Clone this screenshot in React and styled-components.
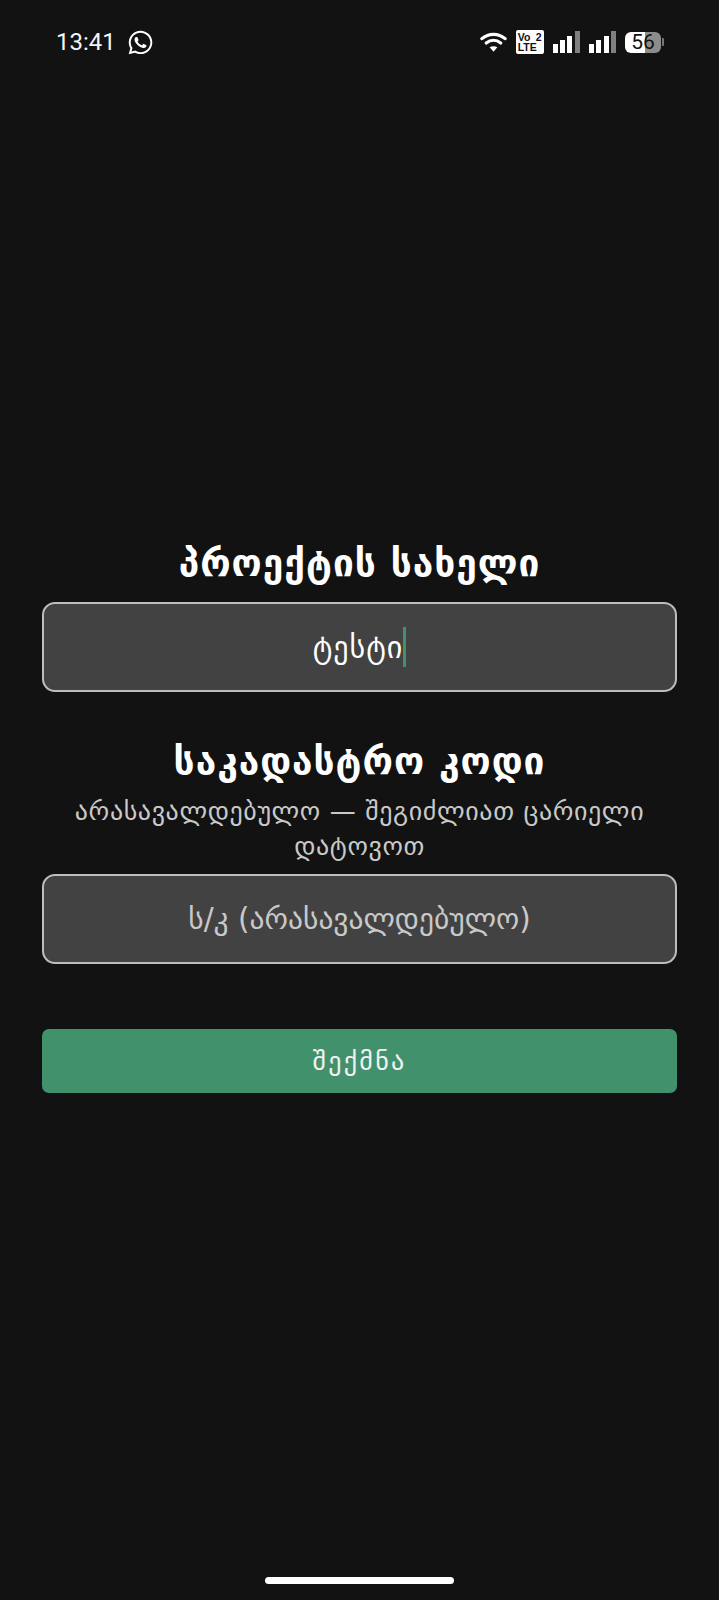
import React from "react";
import styled, { createGlobalStyle } from 'styled-components';
import { FaWhatsapp } from 'react-icons/fa';

const Global = createGlobalStyle`
    html, body {
        margin: 0;
        padding: 0;
        background: #121212;
    }
`;

const Screen = styled.div`
    width: 719px;
    height: 1600px;
    background: #121212;
    color: #fff;
    font-family: "DejaVu Sans", "Noto Sans", sans-serif;
    display: flex;
    flex-direction: column;
    overflow: hidden;
`;

const StatusBar = styled.div`
    height: 84px;
    box-sizing: border-box;
    padding: 0 55px 0 56px;
    display: flex;
    align-items: center;
    justify-content: space-between;
`;

const StatusSide = styled.div`
    display: flex;
    align-items: center;
    gap: ${p => p.$gap || 8}px;
`;

const Clock = styled.span`
    font-family: Roboto, sans-serif;
    font-size: 24px;
    color: #f4f4f4;
    margin-right: 3px;
`;

const VoBadge = styled.div`
    width: 28px;
    height: 24px;
    background: #fff;
    border-radius: 2px;
    color: #111;
    font-family: "Liberation Sans Narrow", "Liberation Sans", sans-serif;
    font-size: 10.5px;
    font-weight: 700;
    line-height: 10px;
    padding: 2px 2px;
    box-sizing: border-box;
    display: flex;
    flex-direction: column;
`;

const VoTop = styled.div`
    display: flex;
    justify-content: space-between;
`;

const Bars = styled.div`
    display: flex;
    align-items: flex-end;
    gap: 2.4px;
    height: 22px;
`;

const Bar = styled.div`
    width: 5px;
    height: ${p => p.$h}px;
    background: ${p => (p.$off ? '#808080' : '#fff')};
`;

const Battery = styled.div`
    display: flex;
    align-items: center;
    gap: 1px;
`;

const BatteryBody = styled.div`
    width: 36px;
    height: 21px;
    border-radius: 6px;
    background: linear-gradient(to right, #fff 0 56%, #8c8c8c 56% 100%);
    color: #111;
    font-family: Roboto, sans-serif;
    font-size: 21px;
    line-height: 21px;
    text-align: center;
`;

const BatteryTip = styled.div`
    width: 2px;
    height: 8px;
    background: #777;
    border-radius: 0 1px 1px 0;
`;

const Form = styled.form`
    flex: 1;
    padding: 454px 42px 0;
    display: flex;
    flex-direction: column;
`;

const Heading = styled.h2`
    margin: 0 0 ${p => p.$after}px;
    font-size: 37px;
    line-height: 52px;
    font-weight: 700;
    text-align: center;
    color: #fff;
    letter-spacing: 1px;
`;

const Hint = styled.p`
    margin: 0 0 10px;
    font-size: 26px;
    line-height: 35px;
    text-align: center;
    color: #c9c9c9;
    letter-spacing: 0.6px;
`;

const Field = styled.div`
    height: 90px;
    box-sizing: border-box;
    background: #424242;
    border: 2px solid #bdbdbd;
    border-radius: 13px;
    display: flex;
    align-items: center;
    justify-content: center;
    font-size: ${p => (p.$placeholder ? 29.5 : 30)}px;
    letter-spacing: ${p => (p.$placeholder ? 0 : 1)}px;
    color: ${p => (p.$placeholder ? '#c9c9c9' : '#fff')};
    margin-bottom: ${p => p.$after}px;
`;

const Caret = styled.span`
    width: 3px;
    height: 40px;
    background: #429070;
`;

const Submit = styled.button`
    height: 64px;
    border: none;
    border-radius: 7px;
    background: #42916d;
    color: #f2f2f2;
    font-family: inherit;
    font-size: 26px;
    letter-spacing: 2.3px;
`;

const HomeBar = styled.div`
    width: 189px;
    height: 7px;
    border-radius: 4px;
    background: #fff;
    margin: 0 auto 16px;
`;

const Wifi = () => (
    <svg width="27" height="24" viewBox="0 0 28 24" fill="none" stroke="#fff" strokeWidth="3.4" strokeLinecap="round">
        <path d="M2 8.5C9 2.5 19 2.5 26 8.5" />
        <path d="M6.5 13C11 9.5 17 9.5 21.5 13" />
        <path d="M14 22l-4-4.5c2.3-1.6 5.7-1.6 8 0z" fill="#fff" stroke="none" />
    </svg>
);

const Signal = () => (
    <Bars>
        <Bar $h={9} />
        <Bar $h={13} />
        <Bar $h={17} />
        <Bar $h={22} $off />
    </Bars>
);

const App = () => (
    <Screen>
        <Global />
        <StatusBar>
            <StatusSide>
                <Clock>13:41</Clock>
                <FaWhatsapp size={27} color="#fff" />
            </StatusSide>
            <StatusSide $gap={9}>
                <Wifi />
                <VoBadge>
                    <VoTop><span>Vo</span><span>2</span></VoTop>
                    <span>LTE</span>
                </VoBadge>
                <Signal />
                <Signal />
                <Battery>
                    <BatteryBody>56</BatteryBody>
                    <BatteryTip />
                </Battery>
            </StatusSide>
        </StatusBar>
        <Form>
            <Heading $after={12}>პროექტის სახელი</Heading>
            <Field $after={44}>ტესტი<Caret /></Field>
            <Heading $after={6}>საკადასტრო კოდი</Heading>
            <Hint>არასავალდებულო — შეგიძლიათ ცარიელი დატოვოთ</Hint>
            <Field $placeholder $after={65}>ს/კ (არასავალდებულო)</Field>
            <Submit type="button">შექმნა</Submit>
        </Form>
        <HomeBar />
    </Screen>
);

export default App;
